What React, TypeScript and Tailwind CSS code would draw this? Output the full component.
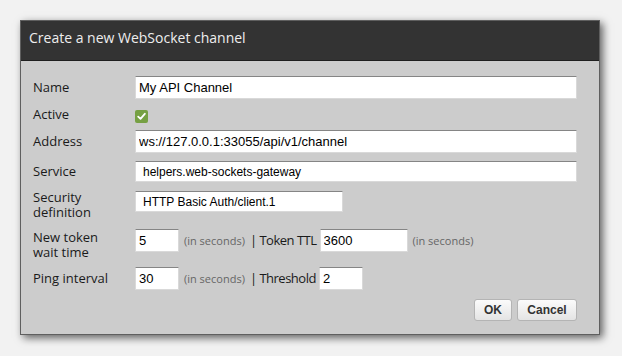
import React from "react";

const inputBase =
  "block border border-[#d9d9d9] border-t-[#858585] bg-white text-black outline-none font-['Liberation_Sans',Arial,sans-serif]";

function Hint() {
  return <span className="ml-[5px] text-[11px] text-[#666] whitespace-nowrap">(in seconds)</span>;
}

export default function App() {
  return (
    <div className="min-h-screen bg-[#f2f2f2] pt-[20px] pl-[20px] font-['Open_Sans',sans-serif]">
      <div className="w-[580px] border border-[#5f5f5f] bg-[#cccccc] shadow-[3px_3px_8px_rgba(0,0,0,0.6)]">
        <div className="h-[40px] bg-[#333333] border-b border-[#1e1e1e] pl-[8px] pt-[9px] text-[14px] leading-[16px] text-[#eeeeee]">
          Create a new WebSocket channel
        </div>
        <div className="pl-[12px] pr-[21px] pt-[15px] pb-[13px] text-[13px] leading-[15px] text-[#1a1a1a]">
          {/* Name */}
          <div className="flex items-center">
            <div className="w-[102px] shrink-0">Name</div>
            <input readOnly defaultValue="My API Channel" className={inputBase + " w-[442px] h-[23px] pl-[3px] text-[13px]"} />
          </div>
          {/* Active */}
          <div className="flex items-start mt-[8px]">
            <div className="w-[102px] shrink-0">Active</div>
            <div className="mt-[3px] w-[13px] h-[13px] rounded-[2px] bg-[#76a043] flex items-center justify-center">
              <svg width="9" height="9" viewBox="0 0 9 9">
                <path d="M1.2 4.6 L3.5 6.8 L7.8 1.8" fill="none" stroke="white" strokeWidth="1.8" strokeLinecap="round" strokeLinejoin="round" />
              </svg>
            </div>
          </div>
          {/* Address */}
          <div className="flex items-center mt-[7px]">
            <div className="w-[102px] shrink-0">Address</div>
            <input readOnly defaultValue="ws://127.0.0.1:33055/api/v1/channel" className={inputBase + " w-[442px] h-[23px] pl-[3px] text-[13px]"} />
          </div>
          {/* Service */}
          <div className="flex items-center mt-[8px]">
            <div className="w-[102px] shrink-0">Service</div>
            <input readOnly defaultValue="helpers.web-sockets-gateway" className={inputBase + " w-[442px] h-[21px] pl-[7px] text-[12px]"} />
          </div>
          {/* Security */}
          <div className="flex items-start mt-[8px]">
            <div className="w-[102px] shrink-0">
              Security
              <br />
              definition
            </div>
            <input readOnly defaultValue="HTTP Basic Auth/client.1" className={inputBase + " mt-[1px] w-[208px] h-[21px] pl-[7px] text-[12px]"} />
          </div>
          {/* New token */}
          <div className="flex items-start mt-[9px]">
            <div className="w-[102px] shrink-0 mt-[1px]">
              New token
              <br />
              wait time
            </div>
            <div className="flex items-center">
              <input readOnly defaultValue="5" className={inputBase + " w-[44px] h-[23px] pl-[3px] text-[13px]"} />
              <Hint />
              <span className="ml-[5px] tracking-[-0.5px] whitespace-nowrap">| Token TTL</span>
              <input readOnly defaultValue="3600" className={inputBase + " ml-[3px] w-[88px] h-[23px] pl-[3px] text-[13px]"} />
              <Hint />
            </div>
          </div>
          {/* Ping */}
          <div className="flex items-center mt-[7px]">
            <div className="w-[102px] shrink-0">Ping interval</div>
            <input readOnly defaultValue="30" className={inputBase + " w-[44px] h-[23px] pl-[3px] text-[13px]"} />
            <Hint />
            <span className="ml-[5px] tracking-[-0.5px] whitespace-nowrap">| Threshold</span>
            <input readOnly defaultValue="2" className={inputBase + " ml-[3px] w-[44px] h-[23px] pl-[3px] text-[13px]"} />
          </div>
          {/* Buttons */}
          <div className="flex justify-end gap-[5px] mt-[9px] pr-[1px]">
            <button className="w-[38px] h-[22px] rounded-[3px] border border-[#b4b4b4] bg-gradient-to-b from-[#fbfbfb] to-[#e4e4e4] text-[12px] font-bold text-[#333] font-['Liberation_Sans',Arial,sans-serif]">
              OK
            </button>
            <button className="w-[60px] h-[22px] rounded-[3px] border border-[#b4b4b4] bg-gradient-to-b from-[#fbfbfb] to-[#e4e4e4] text-[12px] font-bold text-[#333] font-['Liberation_Sans',Arial,sans-serif]">
              Cancel
            </button>
          </div>
        </div>
      </div>
    </div>
  );
}
